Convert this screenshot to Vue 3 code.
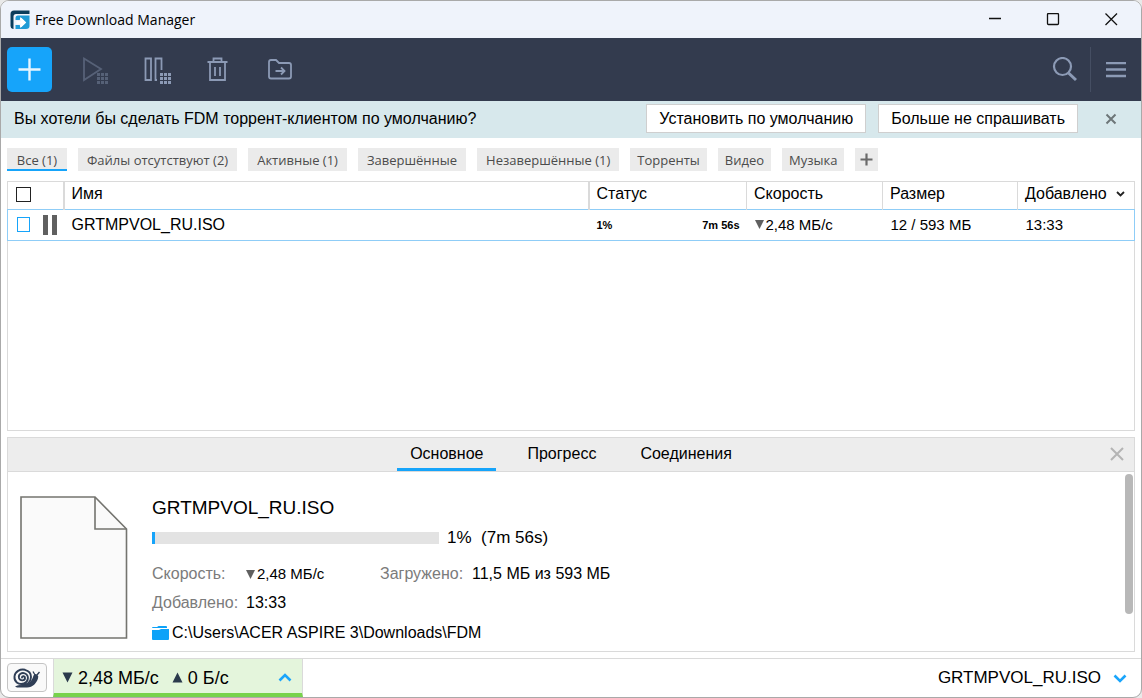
<script setup>
import { ref } from 'vue'

const filters = [
  { label: 'Все (1)', active: true },
  { label: 'Файлы отсутствуют (2)' },
  { label: 'Активные (1)' },
  { label: 'Завершённые' },
  { label: 'Незавершённые (1)' },
  { label: 'Торренты', tag: true },
  { label: 'Видео', tag: true },
  { label: 'Музыка', tag: true },
]
const tabs = ['Основное', 'Прогресс', 'Соединения']
const activeTab = ref('Основное')
const percent = 1
const dots = [0, 1, 2].flatMap((r) => [0, 1, 2].map((c) => ({ x: c * 4, y: r * 4 })))
</script>

<template>
  <div class="window">
    <header class="titlebar">
      <svg class="logo" width="20" height="20" viewBox="0 0 20 20" aria-hidden="true">
        <path d="M3 19 Q0.500 18.500 0.500 16 V4 Q0.500 0.500 4 0.500 H19.500 V4 H6 Q3.500 4 3.500 6.500 V19Z" fill="#0b3d5c" />
        <path d="M5.500 19 V15 H10 V18 L16 12.500 L10 7 V10 H5.500 V8 Q5.500 5.500 8 5.500 H19.500 V16 Q19.500 19 16 19Z" fill="#1f9bd6" />
        <path d="M6.500 12.500 H14 M10.500 8.500 L14.500 12.500 L10.500 16.500" fill="none" stroke="#fff" stroke-width="2.400" />
      </svg>
      <h1>Free Download Manager</h1>
      <div class="win-buttons">
        <button aria-label="Свернуть"><svg width="14" height="14" viewBox="0 0 14 14"><path d="M1 5.500 H13" /></svg></button>
        <button aria-label="Развернуть"><svg width="14" height="14" viewBox="0 0 14 14"><rect x="1.500" y="0.500" width="11" height="11" rx="1" /></svg></button>
        <button aria-label="Закрыть"><svg width="14" height="14" viewBox="0 0 14 14"><path d="M1.500 0.500 L13 12 M13 0.500 L1.500 12" /></svg></button>
      </div>
    </header>

    <nav class="toolbar">
      <button class="add" aria-label="Добавить">
        <svg width="23" height="23" viewBox="0 0 23 23"><path d="M11.500 0.500 V22.500 M0.500 11.500 H22.500" stroke="#e6f5ff" stroke-width="2.400" /></svg>
      </button>
      <button class="tool dim" aria-label="Запустить все">
        <svg width="28" height="28" viewBox="0 0 28 28">
          <path d="M3 2.500 L20 13 L3 24Z" />
          <rect v-for="(d, i) in dots" :key="i" :x="d.x + 16" :y="d.y + 17" width="3" height="3" class="dot" />
        </svg>
      </button>
      <button class="tool" aria-label="Остановить все">
        <svg width="28" height="28" viewBox="0 0 28 28">
          <path d="M2.500 2.500 H8 V24 H2.500Z M14 24 H12.500 V2.500 H18.500 V14" />
          <rect v-for="(d, i) in dots" :key="i" :x="d.x + 17" :y="d.y + 17" width="3" height="3" class="dot" />
        </svg>
      </button>
      <button class="tool" aria-label="Удалить">
        <svg width="28" height="28" viewBox="0 0 28 28">
          <path d="M2.500 6 H22.500 M8.500 5 V2.500 H16.500 V5 M5 7 V24 H20 V7 M10 11 V20 M15 11 V20" />
        </svg>
      </button>
      <button class="tool" aria-label="Переместить">
        <svg width="28" height="28" viewBox="0 0 28 28">
          <path d="M2 21 V6 Q2 4 4 4 H9 L12 7 H22 Q24 7 24 9 V20.500 Q24 22.500 22 22.500 H4 Q2 22.500 2 20.500 M8.500 15 H17 M14 11.500 L17.500 15 L14 18.500" />
        </svg>
      </button>
      <div class="toolbar-right">
        <button class="tool narrow" aria-label="Поиск">
          <svg width="26" height="26" viewBox="0 0 26 26"><circle cx="10.500" cy="9.500" r="8.500" /><path d="M16.500 16 L24 23" stroke-width="3" /></svg>
        </button>
        <button class="tool narrow menu" aria-label="Меню">
          <svg width="20" height="16" viewBox="0 0 20 16"><path d="M0 1 H20 M0 7.500 H20 M0 14 H20" stroke-width="2.400" /></svg>
        </button>
      </div>
    </nav>

    <section class="banner">
      <p>Вы хотели бы сделать FDM торрент-клиентом по умолчанию?</p>
      <button class="choice">Установить по умолчанию</button>
      <button class="choice">Больше не спрашивать</button>
      <button class="dismiss" aria-label="Закрыть сообщение">
        <svg width="12" height="12" viewBox="0 0 12 12"><path d="M1.500 1.500 L10.500 10.500 M10.500 1.500 L1.500 10.500" stroke="#6d7678" stroke-width="2" /></svg>
      </button>
    </section>

    <div class="filters">
      <button v-for="f in filters" :key="f.label" :class="{ active: f.active, tag: f.tag }">{{ f.label }}</button>
      <button class="plus" aria-label="Добавить фильтр">
        <svg width="13" height="13" viewBox="0 0 13 13"><path d="M6.500 0.500 V12.500 M0.500 6.500 H12.500" stroke="#6a6a6a" stroke-width="2.200" /></svg>
      </button>
    </div>

    <main class="list">
      <table>
        <colgroup><col class="c-check" /><col /><col class="c-status" /><col class="c-speed" /><col class="c-size" /><col class="c-added" /></colgroup>
        <thead>
          <tr>
            <th><div class="marks"><input type="checkbox" aria-label="Выбрать все" /></div></th>
            <th>Имя</th>
            <th>Статус</th>
            <th>Скорость</th>
            <th>Размер</th>
            <th>
              <div class="sorted">Добавлено
                <svg width="9" height="6" viewBox="0 0 9 6"><path d="M1 1 L4.500 4.500 L8 1" fill="none" stroke="#222" stroke-width="1.800" /></svg>
              </div>
            </th>
          </tr>
        </thead>
        <tbody>
          <tr>
            <td>
              <div class="marks">
                <input type="checkbox" class="blue" aria-label="Выбрать GRTMPVOL_RU.ISO" />
                <svg width="14" height="20" viewBox="0 0 14 20"><path d="M0 0 H5 V20 H0Z M9 0 H14 V20 H9Z" fill="#606060" /></svg>
              </div>
            </td>
            <td>GRTMPVOL_RU.ISO</td>
            <td><div class="status"><span>1%</span><span>7m 56s</span></div></td>
            <td class="num"><div class="speed"><svg width="9" height="9" viewBox="0 0 9 9"><path d="M0 0 H9 L4.500 9Z" fill="#606060" /></svg>2,48 МБ/с</div></td>
            <td class="num">12 / 593 МБ</td>
            <td class="num">13:33</td>
          </tr>
        </tbody>
      </table>
    </main>

    <section class="panel">
      <div class="panel-head">
        <div class="tabs" role="tablist">
          <button v-for="t in tabs" :key="t" role="tab" :aria-selected="t === activeTab" :class="{ active: t === activeTab }" @click="activeTab = t">{{ t }}</button>
        </div>
        <button class="panel-close" aria-label="Закрыть панель">
          <svg width="14" height="14" viewBox="0 0 14 14"><path d="M1 1 L13 13 M13 1 L1 13" stroke="#b4b4b4" stroke-width="2" /></svg>
        </button>
      </div>
      <div class="panel-body">
        <svg class="file" width="108" height="143" viewBox="0 0 108 143" aria-hidden="true">
          <path d="M1 1 H75 L106.500 33 V142 H1Z" fill="#fafafa" stroke="#74746f" stroke-width="1.600" />
          <path d="M75 1 V33 H106.500" fill="none" stroke="#74746f" stroke-width="1.600" />
        </svg>
        <div class="info">
          <h2>GRTMPVOL_RU.ISO</h2>
          <div class="progress">
            <div class="track" role="progressbar" aria-label="Загрузка" :aria-valuenow="percent"><div class="fill" :style="{ width: percent + '%' }"></div></div>
            <span>1% &nbsp;(7m 56s)</span>
          </div>
          <dl>
            <dt>Скорость:</dt>
            <dd class="num"><div class="speed"><svg width="9" height="9" viewBox="0 0 9 9"><path d="M0 0 H9 L4.500 9Z" fill="#606060" /></svg>2,48 МБ/с</div></dd>
            <dt>Загружено:</dt>
            <dd>11,5 МБ из 593 МБ</dd>
            <dt>Добавлено:</dt>
            <dd>13:33</dd>
          </dl>
          <a class="path" href="#">
            <svg width="18" height="14" viewBox="0 0 18 14"><path d="M0 2 Q0 1 1 1 H5 L6.500 0 H14 Q15 0 15 1 V2 H0Z M0 4 H7 L9 3 H17 V13 Q17 14 16 14 H1 Q0 14 0 13Z" fill="#0da2f8" /></svg>
            <span>C:\Users\ACER ASPIRE 3\Downloads\FDM</span>
          </a>
        </div>
        <div class="scroll"><div class="thumb"></div></div>
      </div>
    </section>

    <footer class="statusbar">
      <button class="snail" aria-label="Режим улитки">
        <svg width="28" height="20" viewBox="0 0 28 20">
          <path d="M2 18.500 Q5 16.500 8 17 Q15 17.500 18 13 Q20 10 20.500 7.500 Q22 5 24 6.500 Q26 8 25 10.500 C23.500 15 20 19.500 14 19.500 H4Z" fill="#2f3e56" />
          <path d="M22 7 L20 3.500 M24 7 L26.500 4" stroke="#2f3e56" stroke-width="1.300" fill="none" />
          <circle cx="9.500" cy="9" r="8.500" fill="#f9f9f9" />
          <path d="M9 9.500 C9 7.500 12 8 12 10 C12 13 7 13.200 6 10 C5 6 9 4.200 12 5.500 C16.500 7.500 15.500 14 11 15.500 C5 17.500 1 13 1.500 8.500 C2 3.500 7 0.800 12 1.800 C16 2.800 18 5.500 18 9 C18 14 14 17.500 9 17.500" fill="none" stroke="#2f3e56" stroke-width="1.900" stroke-linecap="round" />
        </svg>
      </button>
      <button class="traffic">
        <svg width="11" height="11" viewBox="0 0 11 11"><path d="M0.500 0.500 H10.500 L5.500 10.500Z" fill="#2b3a4c" /></svg>
        <span>2,48 МБ/с</span>
        <svg class="up" width="11" height="11" viewBox="0 0 11 11"><path d="M0.500 10.500 H10.500 L5.500 0.500Z" fill="#2b3a4c" /></svg>
        <span>0 Б/с</span>
        <svg class="chev" width="14" height="9" viewBox="0 0 14 9"><path d="M1.500 7.500 L7 2 L12.500 7.500" fill="none" stroke="#1aa5fb" stroke-width="2.600" /></svg>
      </button>
      <button class="current">
        <span>GRTMPVOL_RU.ISO</span>
        <svg width="14" height="9" viewBox="0 0 14 9"><path d="M1.500 1.500 L7 7 L12.500 1.500" fill="none" stroke="#1aa5fb" stroke-width="2.600" /></svg>
      </button>
    </footer>
  </div>
</template>

<style>
body {
  background: #e9e9e9;
}
</style>

<style scoped>
.window,
.window * {
  box-sizing: border-box;
}
.window {
  display: flex;
  flex-direction: column;
  min-height: 100vh;
  border: 1px solid #a9a9a9;
  border-radius: 9px;
  overflow: hidden;
  background: #fff;
  color: #000;
  font: 16px/20px "Liberation Sans", Arial, sans-serif;
}
button {
  display: flex;
  align-items: center;
  justify-content: center;
  padding: 0;
  border: 0;
  background: none;
  color: inherit;
  font: inherit;
  white-space: nowrap;
}
svg {
  flex: none;
  display: block;
}
h1,
h2,
p,
dl,
dd {
  margin: 0;
}

.titlebar {
  display: flex;
  align-items: center;
  height: 37px;
  padding: 0 1px 0 9px;
  background: #eff3fb;
}
h1 {
  margin-left: 5px;
  font: 14px/20px "Open Sans", "Noto Sans", sans-serif;
}
.win-buttons {
  display: flex;
  margin-left: auto;
}
.win-buttons button {
  width: 58px;
  height: 37px;
}
.win-buttons path,
.win-buttons rect {
  fill: none;
  stroke: #111;
  stroke-width: 1.3;
}

.toolbar {
  display: flex;
  align-items: center;
  height: 63px;
  padding-left: 6px;
  background: #333b4e;
}
.add {
  width: 45px;
  height: 45px;
  margin-right: 12px;
  border-radius: 5px;
  background: #16a4fa;
}
.tool {
  width: 62px;
  height: 45px;
}
.tool svg {
  fill: none;
  stroke: #8c9ab5;
  stroke-width: 1.8;
}
.tool .dot {
  fill: #8c9ab5;
  stroke: none;
}
.tool.dim {
  opacity: 0.4;
}
.toolbar-right {
  display: flex;
  margin-left: auto;
}
.tool.narrow {
  width: 51px;
}
.toolbar-right svg {
  stroke-width: 2.2;
}
.tool.menu {
  border-left: 1px solid #454e62;
}

.banner {
  display: flex;
  align-items: center;
  gap: 12px;
  height: 37px;
  padding: 0 24px 2px 13px;
  background: #d7e8ec;
}
.banner p {
  flex: 1;
}
.choice {
  height: 29px;
  padding: 0 12px;
  border: 1px solid #cfcfcf;
  background: #fff;
}
.dismiss {
  margin-left: 15px;
}

.filters {
  display: flex;
  gap: 11px;
  padding: 10px 6px;
}
.filters button {
  height: 23px;
  padding: 0 9px;
  background: #ebebeb;
  color: #4c4c4c;
  font: 13px/20px "Open Sans", "Noto Sans", sans-serif;
}
.filters .tag {
  padding: 0 7px;
}
.filters .active {
  min-width: 60px;
  padding-top: 2px;
  border-bottom: 2px solid #16a4fa;
}
.filters .plus {
  padding: 0 5px;
}

.list {
  flex: 1;
  min-height: 240px;
  margin: 0 6px;
  border: 1px solid #dadada;
}
table {
  width: calc(100% + 2px);
  margin: 0 -1px;
  border-collapse: collapse;
  table-layout: fixed;
}
.c-check {
  width: 56px;
}
.c-status {
  width: 158px;
}
.c-speed {
  width: 136px;
}
.c-size {
  width: 135px;
}
.c-added {
  width: 117px;
}
th,
td {
  padding: 0 7px;
  text-align: left;
  font-weight: normal;
}
th {
  height: 27px;
  padding-bottom: 2px;
  border-right: 1px solid #dadada;
}
th:first-child,
th:nth-child(2) {
  border-right-width: 2px;
}
th:last-child {
  border-right: 0;
}
td {
  height: 31px;
  padding-left: 8px;
}
tbody tr {
  border: 1px solid #8fcdf7;
}
.num {
  font-size: 15px;
}
.marks {
  display: flex;
  align-items: center;
  gap: 13px;
  padding-left: 1px;
}
input {
  appearance: none;
  width: 15px;
  height: 15px;
  margin: 0;
  border: 1px solid #222;
  background: #fff;
}
input.blue {
  border-color: #16a4fa;
}
.sorted {
  display: flex;
  align-items: center;
  gap: 9px;
}
.status {
  display: flex;
  justify-content: space-between;
  font-size: 11px;
  font-weight: bold;
}
.speed {
  display: flex;
  align-items: center;
  gap: 2px;
}

.panel {
  margin: 6px 6px;
  border: 1px solid #dadada;
}
.panel-head {
  display: grid;
  grid-template-columns: 1fr auto 1fr;
  height: 34px;
  border-bottom: 1px solid #dadada;
  background: #ededed;
}
.tabs {
  grid-column: 2;
  display: flex;
  gap: 18px;
}
.tabs button {
  height: 33px;
  padding: 3px 13px 1px;
  border-bottom: 3px solid transparent;
}
.tabs .active {
  border-color: #16a4fa;
}
.panel-close {
  justify-self: end;
  padding: 0 10px 2px 0;
}
.panel-body {
  display: flex;
  gap: 24px;
  padding: 2px 1px 8px 12px;
}
.file {
  margin-top: 22px;
}
.info {
  flex: 1;
  padding-top: 22px;
}
h2 {
  font-size: 19px;
  font-weight: normal;
  line-height: 24px;
}
.progress {
  display: flex;
  align-items: center;
  gap: 8px;
  margin-top: 7px;
  font-size: 17px;
  line-height: 22px;
}
.track {
  width: 287px;
  height: 12px;
  background: #e3e3e3;
}
.fill {
  height: 12px;
  background: #16a4fa;
}
dl {
  display: grid;
  grid-template-columns: 94px 134px 92px auto;
  justify-content: start;
  row-gap: 9px;
  margin-top: 15px;
}
dt {
  color: #7b7b7b;
}
.path {
  display: flex;
  align-items: center;
  gap: 2px;
  margin-top: 10px;
  color: inherit;
  text-decoration: none;
}
.scroll {
  width: 8px;
}
.thumb {
  height: 140px;
  border-radius: 4px;
  background: #b8b8b8;
}

.statusbar {
  display: flex;
  height: 39px;
  border-top: 1px solid #dadada;
  font-size: 18px;
}
.snail {
  width: 40px;
  height: 29px;
  margin: 4px 6px;
  border: 1px solid #c4c4c4;
  border-radius: 4px;
  background: #f9f9f9;
}
.traffic {
  width: 250px;
  padding: 3px 10px 0 8px;
  border: 1px solid #dadada;
  border-width: 0 1px 4px;
  border-bottom-color: #78d24c;
  background: #e4f5dc;
  gap: 5px;
}
.traffic .up {
  margin-left: 8px;
}
.traffic .chev {
  margin-left: auto;
}
.current {
  gap: 12px;
  margin-left: auto;
  padding-right: 14px;
  font-size: 17px;
}
</style>
